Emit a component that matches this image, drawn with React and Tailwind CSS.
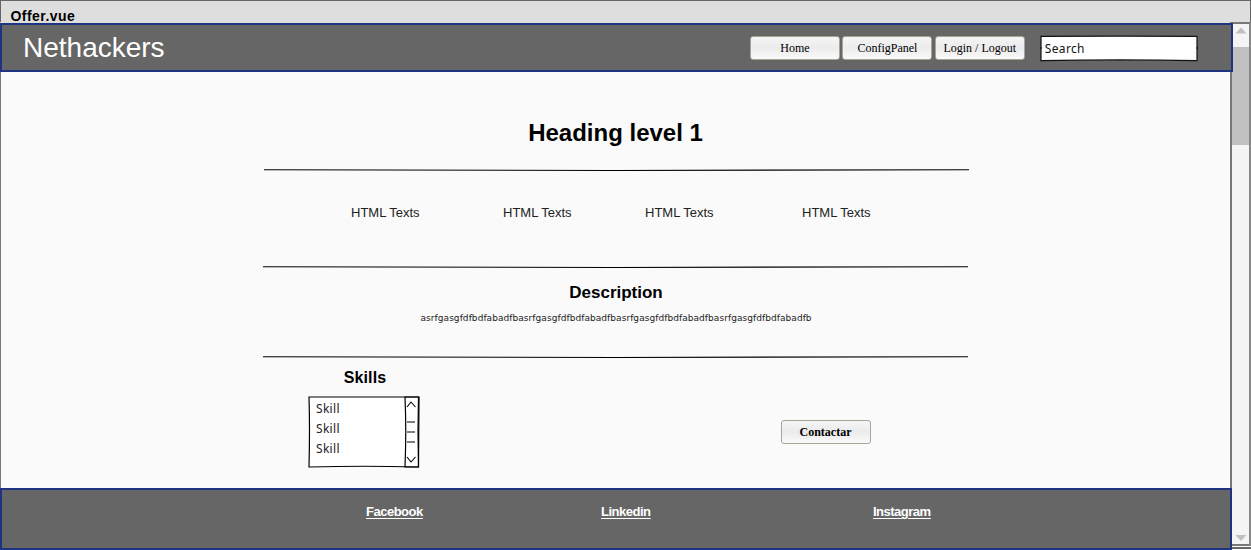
function NavButton({ children, className = "" }) {
  return (
    <button
      className={
        "flex h-6 w-[90px] shrink-0 items-center justify-center rounded-[3px] border border-[#aaa296] bg-linear-to-b from-[#f6f5f6] via-[#ebebec] to-[#fafafa] font-['Liberation_Serif',serif] text-[12px] leading-none whitespace-nowrap text-black " +
        className
      }
    >
      {children}
    </button>
  );
}

function Rule({ className = "" }) {
  return (
    <svg className={"block h-[3px] w-[705px] shrink-0 " + className} viewBox="0 0 705 3" fill="none">
      <path d="M0 0.700Q200 1.500 352 1.500Q505 1.500 705 0.700" stroke="#000" strokeWidth="1.1" />
    </svg>
  );
}

function Header() {
  return (
    <header className="relative z-10 flex h-[49px] w-[1233px] shrink-0 items-start border-2 border-[#1f3480] bg-[#666]">
      <h1 className="ml-[21px] mt-[7px] w-[727px] text-[28px] leading-8 text-white">Nethackers</h1>
      <nav className="mt-[11px] flex gap-[2.4px]">
        <NavButton>Home</NavButton>
        <NavButton>ConfigPanel</NavButton>
        <NavButton>Login / Logout</NavButton>
      </nav>
      <div className="relative ml-[15px] mt-[10px] flex h-[27px] w-[158px] items-center">
        <svg className="absolute inset-0 h-full w-full" viewBox="0 0 158 27">
          <path d="M1 1.300Q80 0.800 157 1.300V25.700Q80 24.200 1 25.700Z" fill="#fff" stroke="#111" strokeWidth="1.2" />
          <path d="M0 13h2M156 13h2" stroke="#111" />
        </svg>
        <span className="relative pl-[5px] font-['Noto_Sans',sans-serif] text-[12px] leading-4 tracking-[0.35px] text-[#111]">
          Search
        </span>
      </div>
    </header>
  );
}

function SkillList() {
  return (
    <div className="relative mt-[7px] flex h-[73px] w-[112px]">
      <svg className="absolute inset-0 h-full w-full" viewBox="0 0 112 73" fill="none" stroke="#000">
        <path d="M1 2H111L110.500 72Q55 70.500 1 72Q2 35 1 2Z" fill="#fff" strokeWidth="1.2" />
        <path d="M97 2Q98.500 36 97 72H110.500Q109.500 36 110.500 2Z" strokeWidth="1.2" />
        <path d="M99 12L103 7L107.500 12M99 62L103 67L107.500 62" strokeWidth="1.1" />
        <path d="M99 27H107M99 37H107M99 47H107" strokeWidth="1.1" />
      </svg>
      <ul className="relative pl-2 pt-[4px] font-['Noto_Sans',sans-serif] text-[12px] leading-5 tracking-[0.3px] text-[#222]">
        <li>Skill</li>
        <li>Skill</li>
        <li>Skill</li>
      </ul>
    </div>
  );
}

function Main() {
  return (
    <main className="flex h-[416px] flex-col border-l border-[#777] bg-[#fafafa] text-black">
      <h2 className="mt-[45px] h-8 text-center text-[24px] leading-8 font-bold">Heading level 1</h2>
      <Rule className="ml-[263px] mt-[20px]" />
      <div className="mt-[31px] flex h-5 pl-[350px] text-[13px] leading-5 text-[#222]">
        <span className="w-[152px]">HTML Texts</span>
        <span className="w-[142px]">HTML Texts</span>
        <span className="w-[157px]">HTML Texts</span>
        <span>HTML Texts</span>
      </div>
      <Rule className="ml-[262px] mt-[43px]" />
      <h3 className="mt-[14px] h-5 pl-px text-center text-[17px] leading-5 font-bold">Description</h3>
      <p className="mt-[7px] h-4 pl-[419.5px] font-['DejaVu_Sans',sans-serif] text-[9px] leading-4 tracking-[0.055px] text-[#222]">
        asrfgasgfdfbdfabadfbasrfgasgfdfbdfabadfbasrfgasgfdfbdfabadfbasrfgasgfdfbdfabadfb
      </p>
      <Rule className="ml-[262px] mt-[30px]" />
      <div className="flex">
        <section className="ml-[307px] w-[472.5px]">
          <h3 className="mt-[9px] w-[114px] text-center text-[16px] leading-5 font-bold tracking-[0.1px]">Skills</h3>
          <SkillList />
        </section>
        <NavButton className="mt-[61px] font-bold">Contactar</NavButton>
      </div>
    </main>
  );
}

function Footer() {
  return (
    <footer className="relative z-10 flex h-[62px] w-[1232px] border-2 border-[#1f3480] bg-[#666] pl-[364px] pt-[12px] text-[13px] leading-5 font-bold tracking-[-0.5px] text-white underline underline-offset-2">
      <a className="w-[235px]">Facebook</a>
      <a className="w-[272px]">Linkedin</a>
      <a>Instagram</a>
    </footer>
  );
}

function ScrollBar() {
  return (
    <aside className="flex w-[21px] shrink-0 flex-col">
      <div className="flex h-[524px] flex-col border-x-2 border-y-2 border-[#777] border-r-[#888] bg-[#f4f4f4]">
        <svg className="mx-auto h-[23px] w-4 shrink-0" viewBox="0 0 16 23">
          <path d="M2.500 9.500L8 3.500L13.500 9.500Z" fill="#c0c0c0" />
        </svg>
        <div className="h-[98px] shrink-0 bg-[#c0c0c0]" />
        <svg className="mx-auto mt-auto h-4 w-4 shrink-0" viewBox="0 0 16 16">
          <path d="M2.500 7L8 13L13.500 7Z" fill="#c0c0c0" />
        </svg>
      </div>
      <div className="mt-[1px] h-[2px] bg-[#666]" />
    </aside>
  );
}

export default function App() {
  return (
    <div className="flex h-[550px] w-[1251px] flex-col overflow-hidden bg-white font-['Liberation_Sans',Arial,sans-serif]">
      <div className="h-[22px] shrink-0 border-x border-t border-[#666] bg-[#dedede] pl-[9.5px] pt-[5px] text-[14px] leading-5 font-bold tracking-[0.45px] text-black">
        Offer.vue
      </div>
      <div className="flex h-[528px]">
        <div className="flex w-[1230px] shrink-0 flex-col">
          <div className="h-px shrink-0 bg-[#dedede]" />
          <Header />
          <Main />
          <Footer />
        </div>
        <ScrollBar />
      </div>
    </div>
  );
}
